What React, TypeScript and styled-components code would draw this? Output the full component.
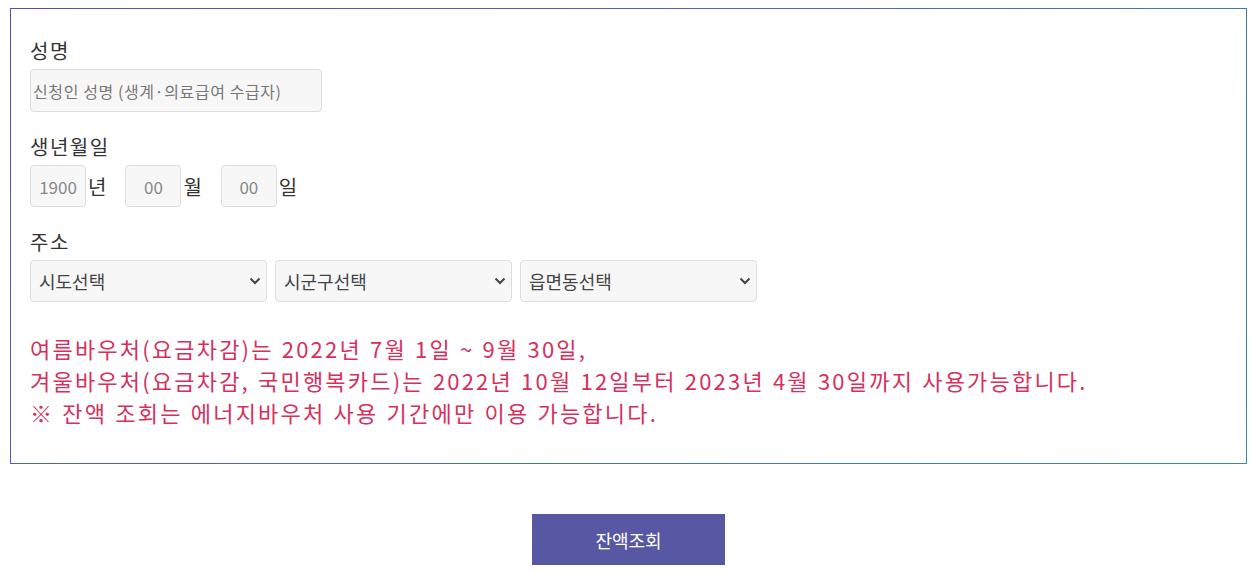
import React from "react";
import styled, { createGlobalStyle } from "styled-components";

const Global = createGlobalStyle`
  html, body { margin: 0; padding: 0; background: #fff; }
  body { font-family: "Noto Sans CJK KR", "Noto Sans", sans-serif; color: #333; }
  * { box-sizing: border-box; }
`;

const Page = styled.div`
  padding: 8px 6px 0 10px;
`;

const Box = styled.section`
  border: 1px solid;
  border-image: linear-gradient(135deg, #5252a8, #4a6cb0 50%, #3a8ca0) 1;
  height: 456px;
  padding: 27px 20px 0 19px;
`;

const Field = styled.div`
  margin-bottom: 20px;
`;

const Label = styled.div`
  font-size: 20px;
  line-height: 30px;
  color: #333;
  letter-spacing: 1.5px;
  margin-bottom: 3px;
`;

const TextInput = styled.input`
  width: 292px;
  height: 43px;
  border: 1px solid #ddd;
  border-radius: 4px;
  background: #f7f7f7;
  padding: 0 2px;
  font-family: inherit;
  font-size: 16px;
  letter-spacing: 0.6px;
  color: #555;
  &::placeholder { color: #777; }
`;

const DateRow = styled.div`
  display: flex;
  align-items: center;
`;

const DateInput = styled.input`
  width: 56px;
  height: 42px;
  border: 1px solid #ddd;
  border-radius: 4px;
  background: #f7f7f7;
  text-align: center;
  font-family: inherit;
  font-size: 17px;
  padding: 0;
  &::placeholder { color: #888; }
`;

const Unit = styled.span<{ $gap: number }>`
  font-size: 20px;
  color: #333;
  margin-left: 2px;
  margin-right: ${(p) => p.$gap}px;
`;

const SelectRow = styled.div`
  display: flex;
  gap: 8px;
`;

const SelectWrap = styled.div`
  position: relative;
  width: 237px;
`;

const Select = styled.select`
  appearance: none;
  width: 100%;
  height: 42px;
  border: 1px solid #ddd;
  border-radius: 4px;
  background: #f7f7f7;
  font-family: inherit;
  font-size: 18px;
  color: #444;
  padding: 0 8px;
`;

const Chevron = styled.svg`
  position: absolute;
  right: 6px;
  top: 16px;
  pointer-events: none;
`;

const Notice = styled.p`
  margin: 30px 0 0;
  color: #d6305d;
  font-size: 22px;
  line-height: 32px;
  letter-spacing: 2.2px;
  word-spacing: 1px;
`;

const Footer = styled.div`
  display: flex;
  justify-content: center;
  padding: 50px 0 0;
`;

const Button = styled.button`
  width: 193px;
  height: 51px;
  background: #5757a3;
  color: #fff;
  border: none;
  font-family: inherit;
  font-size: 18px;
`;

const Arrow = () => (
  <Chevron width="12" height="10" viewBox="0 0 12 10">
    <path d="M1.5 2.5 L6 7 L10.5 2.5" fill="none" stroke="#444" strokeWidth="2" />
  </Chevron>
);

export default function App() {
  return (
    <>
      <Global />
      <Page>
        <Box>
          <Field>
            <Label>성명</Label>
            <TextInput placeholder="신청인 성명 (생계·의료급여 수급자)" />
          </Field>
          <Field>
            <Label>생년월일</Label>
            <DateRow>
              <DateInput placeholder="1900" />
              <Unit $gap={19}>년</Unit>
              <DateInput placeholder="00" />
              <Unit $gap={19}>월</Unit>
              <DateInput placeholder="00" />
              <Unit $gap={0}>일</Unit>
            </DateRow>
          </Field>
          <Field>
            <Label>주소</Label>
            <SelectRow>
              <SelectWrap>
                <Select><option>시도선택</option></Select>
                <Arrow />
              </SelectWrap>
              <SelectWrap>
                <Select><option>시군구선택</option></Select>
                <Arrow />
              </SelectWrap>
              <SelectWrap>
                <Select><option>읍면동선택</option></Select>
                <Arrow />
              </SelectWrap>
            </SelectRow>
          </Field>
          <Notice>
            여름바우처(요금차감)는 2022년 7월 1일 ~ 9월 30일,
            <br />
            겨울바우처(요금차감, 국민행복카드)는 2022년 10월 12일부터 2023년 4월 30일까지 사용가능합니다.
            <br />
            ※ 잔액 조회는 에너지바우처 사용 기간에만 이용 가능합니다.
          </Notice>
        </Box>
        <Footer>
          <Button>잔액조회</Button>
        </Footer>
      </Page>
    </>
  );
}
